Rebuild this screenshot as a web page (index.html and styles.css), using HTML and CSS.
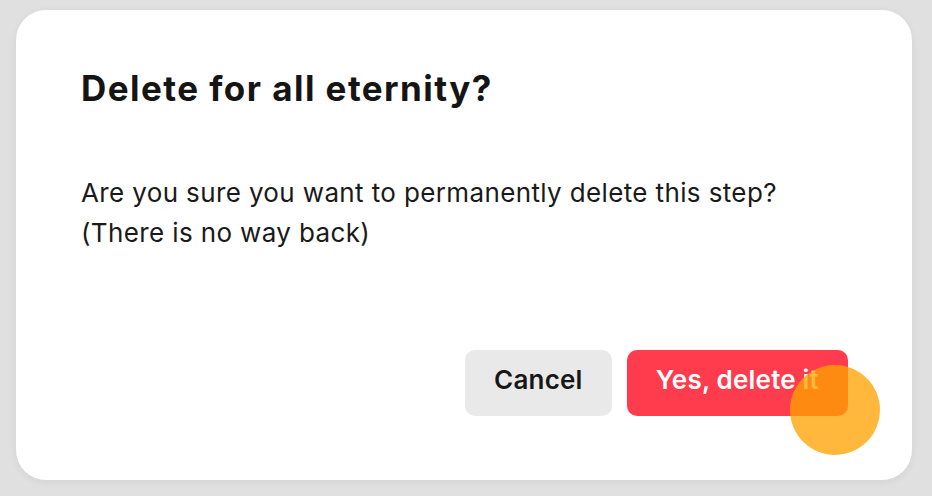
FILE: index.html
```html
<!DOCTYPE html>
<html lang="en">
<head>
<meta charset="utf-8">
<title>Delete step</title>
<link rel="stylesheet" href="styles.css">
</head>
<body>
<div class="backdrop">
  <div class="dialog">
    <h1 class="dialog-title">Delete for all eternity?</h1>
    <p class="dialog-text">Are you sure you want to permanently delete this step?<br>(There is no way back)</p>
    <div class="dialog-actions">
      <button class="btn btn-cancel">Cancel</button>
      <button class="btn btn-danger">Yes, delete it</button>
    </div>
  </div>
  <div class="cursor-dot"></div>
</div>
</body>
</html>
```
FILE: styles.css
```css
html, body {
  margin: 0;
  padding: 0;
  background: #e0e0e0;
  font-family: Inter, "Noto Sans", sans-serif;
}
.backdrop {
  position: relative;
  width: 932px;
  height: 496px;
  box-sizing: border-box;
  padding: 10px 20px 16px 16px;
}
.dialog {
  box-sizing: border-box;
  width: 896px;
  height: 470px;
  background: #fff;
  border-radius: 30px;
  box-shadow: 0 2px 8px rgba(0,0,0,0.06);
  padding: 57px 64px 64px 65px;
  display: flex;
  flex-direction: column;
}
.dialog-title {
  margin: 0;
  font-size: 35px;
  line-height: 42px;
  font-weight: 700;
  color: #151515;
  letter-spacing: 1.45px;
}
.dialog-text {
  margin: 64px 0 0;
  font-size: 26px;
  line-height: 40px;
  font-weight: 400;
  color: #1a1a1a;
  letter-spacing: 0.37px;
}
.dialog-actions {
  margin-top: auto;
  display: flex;
  justify-content: flex-end;
  gap: 15px;
}
.btn {
  box-sizing: border-box;
  height: 66px;
  padding: 0 29px 8px;
  border: none;
  border-radius: 10px;
  font-family: Inter, "Noto Sans", sans-serif;
  font-size: 26px;
  font-weight: 600;
  letter-spacing: 0.2px;
  cursor: pointer;
}
.btn-cancel {
  background: #e9e9e9;
  color: #171717;
}
.btn-danger {
  background: #ff3b4e;
  color: #fff;
}
.cursor-dot {
  position: absolute;
  left: 790px;
  top: 365px;
  width: 90px;
  height: 90px;
  border-radius: 50%;
  background: rgba(255, 163, 0, 0.77);
}
```
